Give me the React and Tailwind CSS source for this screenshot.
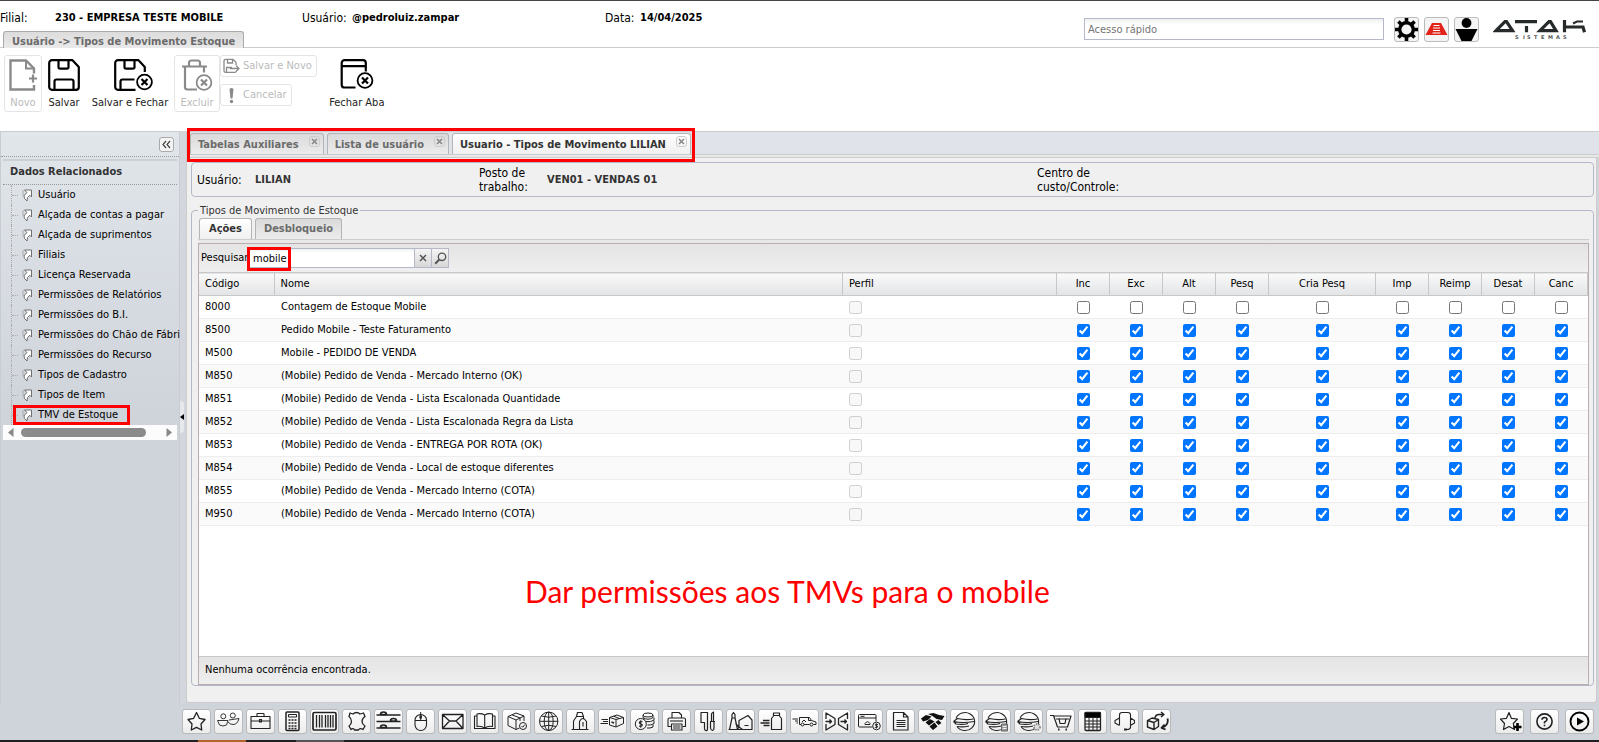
import React from "react";

const MENU = [
  "Usuário",
  "Alçada de contas a pagar",
  "Alçada de suprimentos",
  "Filiais",
  "Licença Reservada",
  "Permissões de Relatórios",
  "Permissões do B.I.",
  "Permissões do Chão de Fábri",
  "Permissões do Recurso",
  "Tipos de Cadastro",
  "Tipos de Item",
  "TMV de Estoque",
];

const FLAGS = ["Inc", "Exc", "Alt", "Pesq", "Cria Pesq", "Imp", "Reimp", "Desat", "Canc"];

const ROWS = [
  ["8000", "Contagem de Estoque Mobile", false],
  ["8500", "Pedido Mobile - Teste Faturamento", true],
  ["M500", "Mobile - PEDIDO DE VENDA", true],
  ["M850", "(Mobile) Pedido de Venda - Mercado Interno (OK)", true],
  ["M851", "(Mobile) Pedido de Venda - Lista Escalonada Quantidade", true],
  ["M852", "(Mobile) Pedido de Venda - Lista Escalonada Regra da Lista", true],
  ["M853", "(Mobile) Pedido de Venda - ENTREGA POR ROTA (OK)", true],
  ["M854", "(Mobile) Pedido de Venda - Local de estoque diferentes", true],
  ["M855", "(Mobile) Pedido de Venda - Mercado Interno (COTA)", true],
  ["M950", "(Mobile) Pedido de Venda - Mercado Interno (COTA)", true],
];

/* ---------- toolbar icons ---------- */

const CloseBadge = ({ cx, cy }) => (
  <g>
    <circle cx={cx} cy={cy} r="7.4" strokeWidth="1.8" />
    <path d={`M${cx - 3} ${cy - 3}l6 6m0-6l-6 6`} strokeWidth="2.2" />
  </g>
);

const NewIcon = () => (
  <svg width="30" height="32" viewBox="0 0 30 32" fill="none" stroke="#8a8a8a" strokeWidth="2.4">
    <path d="M26 14.5V9.5L18 1.5H2.5V30.5H26V26" />
    <path d="M18 1.5V9.5H26" strokeWidth="2" />
    <path d="M25 15.5v8M21 19.5h8" strokeWidth="2.2" />
  </svg>
);

const SaveIcon = () => (
  <svg width="32" height="32" viewBox="0 0 32 32" fill="none" stroke="#000" strokeWidth="2.2" strokeLinejoin="round">
    <path d="M4 1.2h20.5L30.8 8v20a2.8 2.8 0 0 1-2.8 2.8H4A2.8 2.8 0 0 1 1.2 28V4A2.8 2.8 0 0 1 4 1.2z" />
    <path d="M10.5 1.5V8a1.6 1.6 0 0 0 1.6 1.6h6.8A1.6 1.6 0 0 0 20.5 8V1.5" />
    <path d="M6.5 30.5V22.5a2 2 0 0 1 2-2h15a2 2 0 0 1 2 2v8" />
  </svg>
);

const SaveCloseIcon = () => (
  <svg width="46" height="32" viewBox="-7 0 46 32" fill="none" stroke="#000" strokeWidth="2.2" strokeLinejoin="round">
    <path d="M21.5 30.8H4A2.8 2.8 0 0 1 1.2 28V4A2.8 2.8 0 0 1 4 1.2h20.5L30.8 8v5" />
    <path d="M10.5 1.5V8a1.6 1.6 0 0 0 1.6 1.6h6.8A1.6 1.6 0 0 0 20.5 8V1.5" />
    <path d="M6.5 30.5V22.5a2 2 0 0 1 2-2h12" />
    <CloseBadge cx={30.5} cy={23} />
  </svg>
);

const TrashIcon = () => (
  <svg width="32" height="32" viewBox="0 0 32 32" fill="none" stroke="#8a8a8a" strokeWidth="2.2" strokeLinejoin="round">
    <path d="M1 7.5h25M8 7.5V4a2.5 2.5 0 0 1 2.5-2.5h6A2.5 2.5 0 0 1 19 4v3.5" />
    <path d="M4 8v20a2.5 2.5 0 0 0 2.5 2.5H16M23 8v5.5" />
    <CloseBadge cx={23} cy={23.5} />
  </svg>
);

const CloseTabIcon = () => (
  <svg width="34" height="32" viewBox="0 0 34 32" fill="none" stroke="#000" strokeWidth="2.2" strokeLinejoin="round">
    <path d="M15.5 28.5H4.5A2.8 2.8 0 0 1 1.7 25.7V4a2.8 2.8 0 0 1 2.8-2.8H23A2.8 2.8 0 0 1 25.8 4v8.5M1.7 7.2h24" />
    <CloseBadge cx={25} cy={21.5} />
  </svg>
);

const SaveNewIcon = () => (
  <svg width="17" height="16" viewBox="0 0 17 16" fill="none" stroke="#8a8a8a" strokeWidth="1.3">
    <path d="M13 13.2Q13 14.3 11.8 14.3H2.5a1.5 1.5 0 0 1-1.5-1.5v-10A1.5 1.5 0 0 1 2.5 1.3H10l3 3V7M4.5 1.5V5h5V1.5M3.5 14V9.5H9" />
    <path d="M7 10.5H16M13 7.5L16 10.5L13 13.5" />
  </svg>
);

const ShortcutIcon = () => (
  <svg className="shrink-0" width="11" height="13" viewBox="0 0 11 13" fill="#fff" stroke="#6f6f6f" strokeWidth="1">
    <path d="M1 1v6" stroke="#aaa" />
    <path d="M2.5 1H9.5V8L7.800 6.300Q4.500 8 5 12Q1.500 9.500 2 7Q2.500 5.500 5 3.500z" strokeLinejoin="round" />
  </svg>
);

/* ---------- bottom bar icons ---------- */

const Ball = () => (
  <g strokeWidth="1.1">
    <path d="M5 8.500A9.600 9 0 1 1 6 16.500" />
    <path d="M2.500 11.500L6.500 8.500Q14 10.500 22.500 9M2.500 11.500Q12 13.500 23 11.500M2.500 11.500L5 14Q12 15 17 13.500M6 16.500Q12 17.500 18 16" />
  </g>
);

const DOCK = [
  <path key="i" strokeWidth="1.300" d="M13.500 2.500L16.300 8.300L22 9.500L18 14L18.700 20L13.500 17.300L8.300 20L9 14L5 9.500L10.700 8.300z" />,
  <g key="i" strokeWidth=".9"><circle cx="8.300" cy="6.300" r="2.500" /><circle cx="17.800" cy="5.500" r="2.500" /><path d="M2.500 10.500H13L11.500 15Q8 17 4.500 15zM14 10L24 8.500Q22.500 14.500 18 14.500Q15 14.500 13 12" /></g>,
  <g key="i" strokeWidth="1.100"><path d="M4 6.500H23V18.500H4zM4 11H23M10 6V4Q10 3.500 10.500 3.500H16.500Q17 3.500 17 4V6M12.500 9.500h2v2.500h-2z" /></g>,
  <g key="i"><rect x="7" y="2" width="13" height="18.500" rx="1" strokeWidth="1.500" /><path d="M9.500 4.500H17.500V7H9.500z" /><path d="M9.500 10h2m1 0h2m1 0h2m-8 3h2m1 0h2m1 0h2m-8 3h2m1 0h2m1 0h2m-8 2.500h2m1 0h2m1 0h2" strokeWidth="1.500" /></g>,
  <g key="i"><rect x="2" y="2.500" width="23" height="17.500" rx="1.500" strokeWidth="1.700" /><path d="M5.500 5v12.500M8.500 5v12.500M11 5v12.500M14.500 5v12.500M17 5v12.500M19.500 5v12.500M22 5v12.500" strokeWidth="1.300" /></g>,
  <path key="i" strokeWidth="1.300" d="M7 3L10 4Q11.500 2.500 13.500 2.500Q15.500 2.500 17 4L20.500 3L22 6.500Q19 8.500 19 11.500Q19 14 22 16L20 19.500Q17 17.500 15.500 20H11.500Q10.500 17.500 8 19.500L6 16Q8.500 14 8.500 11.500Q8.500 8.500 6 6.500z" />,
  <g key="i" strokeWidth="1.600"><path d="M1.500 5H25.500M1.500 11.500H25.500M1.500 18H25.500" /><path d="M5.500 4.500a3 2.500 0 0 1 6 0zM15.500 11a3 2.500 0 0 1 6 0zM5.500 17.500a3 2.500 0 0 1 6 0z" fill="#fff" /></g>,
  <g key="i"><rect x="8" y="4.500" width="11.500" height="16" rx="5.700" strokeWidth="1.100" /><path d="M13.700 2v8M8 10.500H19.500" /><path d="M13.700 5.500v3" strokeWidth="2.500" /></g>,
  <g key="i" strokeWidth="1.300"><path d="M3.500 4.500H24V18.500H3.500zM3.500 4.500L10.500 11H17L24 4.500M3.500 18.500L10.500 11M24 18.500L17 11" /></g>,
  <g key="i" strokeWidth="1.100"><path d="M13.700 5Q10 3 6 4V16.500Q10 15.500 13.700 18Q17 15.500 21.500 16.500V4Q17 3 13.700 5zV18M6 6H3.500V18.500H24V6H21.500" /></g>,
  <g key="i"><path d="M5 6.500L13 3L21 6V11M5 6.500L13 10L21 6M5 6.500V15.500L13 19.500V10M13 19.500L16.500 18M9 4.800L17 8V11" /><circle cx="20" cy="16" r="3.500" /><path d="M18.500 16l1.200 1.200l2-2.500" /></g>,
  <g key="i"><circle cx="13.700" cy="11.300" r="9.200" /><ellipse cx="13.700" cy="11.300" rx="4.500" ry="9.200" /><path d="M13.700 2V20.500M4.500 11.300H23M6.500 6Q13.700 8.500 21 6M6.500 16.500Q13.700 14 21 16.500" /></g>,
  <g key="i" strokeWidth="1.100"><path d="M9.500 6.500L10.500 2.500H15L16.500 6.500zM9.500 6.500L6.500 11V19.500M16.500 6.500V8.500M12.500 19.500V11.500Q15.500 5.500 19.500 11.500V19.500M4.500 19.500H21.500M16 12V16.500" /></g>,
  <g key="i"><path d="M10.500 7.500L18 5L24.500 7.500V13.500L17 17L10.500 15zM10.500 7.500L17 9.500L24.500 7.500M17 9.500V17M14.500 6.200L20.500 8.500M2.500 9.500H9M4 11.500H9M1.500 13.500H9" /><path d="M12.500 12l2.500 1" strokeWidth="1.800" /></g>,
  <g key="i"><ellipse cx="17" cy="5" rx="5" ry="2" /><path d="M12 5v2.500Q17 11 22 7.500V5M13 8v2M14.500 11.500Q20 12.500 23 10V7.500M23 10.500V13.500Q20 15.500 16.500 15M22 14.500V17Q19 18.500 16 18" /><circle cx="9.800" cy="14" r="5.500" fill="#f8f8f8" /><path d="M11.500 11.800Q8.500 10.800 8.300 12.700Q8.500 13.800 10 14Q11.500 14.400 11.300 15.600Q10.500 17 8 16M9.800 10.300v7.500" strokeWidth="1.100" /></g>,
  <g key="i" strokeWidth="1.100"><path d="M9 8V2.500H16L18.500 5V8M8 16.500H5V9.500Q5 8 6.500 8H21Q22.500 8 22.500 9.500V16.500H19.500" /><path d="M8.500 14H19V20H8.500zM10 16H17.500M10 18H17.500" fill="#f8f8f8" /><path d="M7 11h13" /></g>,
  <g key="i" strokeWidth="1.200"><path d="M6 2.500H12.500V19.500Q12 21 10.500 20.500Q9.500 20 9.500 18.500V12.500H6zM16.500 11.500V4Q17 2.500 18.500 2V11.500M15 11.500H20M15.500 11.500V18Q16 20.500 17.500 20.500Q19 20 19 18V11.500" /></g>,
  <g key="i" strokeWidth="1.200"><path d="M2.500 19.500L5 8V4.500L6.500 2.500L8 4.500V8L10.500 19.500M5 8H8M1.500 19.500H25V10L21 5.500L12 10.500V17L8.500 13.500M10.500 19.500L12 17L15.500 19.500M17.500 15.500H21.500" /></g>,
  <g key="i" strokeWidth="1.200"><path d="M14.500 3H20.500V5.500H14.500zM14.500 6L12.500 8.500V19.500H22.500V8.500L20.500 6" /><path d="M4 10.500H10.500M1.500 13H10.500M4.500 15.500H10.500" strokeWidth="1.400" /></g>,
  <g key="i"><path d="M8.500 14.500V7.500H18.500L20.500 10.500L25 12V14.500H22.500M8.500 14.500H10M13 14.500H18.500M17.500 7.500V10.500H20.500M1.500 9H7M4 11H7M5.500 13H7" /><circle cx="11.500" cy="14.500" r="1.500" /><circle cx="20.500" cy="14.500" r="1.500" /><path d="M11 12l2-2l2 2" /></g>,
  <g key="i" strokeWidth="1.300"><path d="M3 9V3L12 8.500V14.500L3 20V14M24.500 9V3L15.500 8.500V14.500L24.500 20V14M2.500 11.500H8.500M6.500 9.500L8.500 11.500L6.500 13.500M17.500 11.500H23.500M21.500 9.500L23.500 11.500L21.500 13.500" /></g>,
  <g key="i"><path d="M17.500 17H4.500Q3.500 17 3.500 16V5.500Q3.500 4.500 4.500 4.500H20Q21 4.500 21 5.500V11.500M3.500 8H21M5.500 6.300h4" /><path d="M10 14.500v-1q2.500-3.500 5 0v1z" /><circle cx="21.500" cy="16" r="3.800" fill="#f8f8f8" /><path d="M23 14.500q-3-1-3 .5q3 .5 2.800 2q-1 1-3 .3M21.500 13.500v5" strokeWidth=".9" /></g>,
  <g key="i" strokeWidth="1.200"><path d="M6.500 2.500H16.500L21 7V20H6.500zM16.500 2.500V7H21" /><path d="M9.500 10.500H18.500M9.500 12.500H18.500M9.500 14.500H18.500M9.500 16.500H18.500" /></g>,
  <g key="i" fill="#111" stroke="none"><path d="M2 8.500L7 5L12.500 6.500L9 10L4 11.500zM9 4L14.500 3L20 5L25.500 6L23 10L17.500 9L13.500 6z" /><path d="M6.500 12.500L11 9L15.500 11.500L10 15.500zM16.500 12L19.500 10L22.500 13L19.500 15zM10.500 16.500L15.500 12.500L18.500 16.500L14 20z" /></g>,
  <Ball key="i" />,
  <g key="i"><Ball /><rect x="18.500" y="14" width="6" height="7" fill="#999" stroke="#666" /><path d="M19.500 16.500h4M19.500 18.500h4" stroke="#eee" /></g>,
  <g key="i"><Ball /><circle cx="22" cy="17" r="3" fill="#ddd" stroke="#888" strokeDasharray="1.500 1" strokeWidth="1.800" /></g>,
  <g key="i" strokeWidth="1.200"><path d="M3 5.500H6.500L10.500 17H20.500L24 6H7M9 9h13" /><path d="M12 8.500L13 13.500H18L19 8.500" /><path d="M11 19.500h1.500M18.500 19.500h1.500" strokeWidth="2.200" /></g>,
  <g key="i"><rect x="6" y="2.500" width="15.500" height="18" rx="1" strokeWidth="1.300" /><path d="M6 2.500h15.500v5H6z" fill="#000" /><path d="M6 11h15.500M6 14h15.500M6 17h15.500M10 8v12.500M14 8v12.500M18 8v12.500" /></g>,
  <g key="i" strokeWidth="1.100"><path d="M8.500 15V5Q8.500 2.500 11 2.500H17Q19.500 2.500 19.500 5V15M8.500 8L4 10.500V13L8.500 15.500M19.500 8L23.500 10.500V13L19.500 15.500V17.500Q19 19.500 16 19.500H14.500" /><path d="M13 19.500h3" strokeWidth="2" /></g>,
  <g key="i" strokeWidth="1.400"><path d="M4.500 10.500L9 8L15.500 9.500V16.500L11 19.500L4.500 17zM4.500 10.500L11 12.500L15.500 9.500M11 12.500V19.500M12 8Q12.500 4.500 16 4.500H20M18 2L21 4.500L18 7" /><path d="M24.500 8.500Q26 15 19.500 17.500M21.500 14.500L18.500 17.800L22.500 19.500" strokeWidth="1.800" /></g>,
];

const DOCK_NAMES = [
  "Favoritos", "Balança", "Pasta", "Calculadora", "Código de barras", "Couro", "Ajustes", "Mouse", "Mensagens", "Livro",
  "Conferência", "Globo", "Produto", "Entrega", "Financeiro", "Impressora", "Abate", "Indústria", "Leite", "Frota",
  "Integração", "Cobrança", "Documento", "Receita", "Fiscal", "Fiscal cálculo", "Fiscal ajustes", "Compras", "Planilha", "Suporte", "Devolução",
];

const SIDE_DOCK = [
  ["Adicionar favorito", <g key="i"><path strokeWidth="1.200" d="M13 2.500L15.300 8.300L21.500 9L17.300 13.500L18.500 19.500L13 16.500L7.500 19.500L8.500 13.500L4.500 9L10.500 8.300z" /><path d="M21.500 13v8M17.500 17h8" strokeWidth="2.600" stroke="#000" /></g>],
  ["Ajuda", <g key="i" strokeWidth="1.600"><circle cx="13.500" cy="11.500" r="7.600" /><path d="M11 9.800Q11 7.500 13.500 7.500Q16 7.500 16 9.500Q16 11 13.500 12V13.500M13.500 14.700v1.600" /></g>],
  ["Executar", <g key="i"><circle cx="13.500" cy="11.500" r="9" strokeWidth="1.900" stroke="#000" /><path d="M11 7.500L18 11.500L11 15.500z" fill="#000" stroke="none" /></g>],
];

const DockButton = ({ label, children }) => (
  <button aria-label={label} className="h-[25px] w-[29px] shrink-0 rounded-[3px] border border-[#b9b9b9] bg-gradient-to-b from-white to-[#ececec]">
    <svg width="27" height="23" viewBox="0 0 27 23" fill="none" stroke="#222" strokeWidth="1" strokeLinejoin="round">
      {children}
    </svg>
  </button>
);

/* ---------- parts ---------- */

const Header = () => (
  <header className="flex h-12 border-t border-b border-t-[#444] border-b-[#ccc]">
    <div className="flex-1">
      <div className="grid h-[27px] grid-cols-[302px_303px_1fr] items-center pt-1.5 text-[12px] leading-4">
        <div className="flex items-center"><span className="w-[55px]">Filial:</span><b className="text-[11px]">230 - EMPRESA TESTE MOBILE</b></div>
        <div className="flex items-center"><span className="w-[50px]">Usuário:</span><b className="text-[11px]">@pedroluiz.zampar</b></div>
        <div className="flex items-center"><span className="w-[35px]">Data:</span><b className="text-[11px]">14/04/2025</b></div>
      </div>
      <button className="ml-[3px] h-[21px] rounded-t-[3px] border border-b-0 border-[#aaa] bg-gradient-to-b from-[#dcdcdc] to-[#ededed] px-2 text-[11px] font-bold text-[#6b6b6b]">
        Usuário -&gt; Tipos de Movimento Estoque
      </button>
    </div>
    <div className="flex items-start pt-4 pr-3">
      <input
        aria-label="Acesso rápido"
        placeholder="Acesso rápido"
        className="mt-px mr-2.5 h-[22px] w-[300px] border border-[#b5b8c8] bg-gradient-to-b from-[#eef1f1] to-white to-30% px-[3px] text-[11px] placeholder:text-[#757575]"
      />
      <div className="flex gap-[5px]">
        <button aria-label="Configurações" className="size-[25px] rounded-[3px] border border-[#bbb] bg-[#f4f4f4]">
          <svg width="23" height="23" viewBox="0 0 23 23">
            <circle cx="11.500" cy="11.500" r="6.800" fill="none" stroke="#000" strokeWidth="3.400" />
            <path d="M11.500 0v4M11.500 19v4M0 11.500h4M19 11.500h4M3.400 3.400l2.800 2.800M16.800 16.800l2.800 2.800M3.400 19.600l2.800-2.800M16.800 6.200l2.800-2.800" stroke="#000" strokeWidth="3.600" />
          </svg>
        </button>
        <button aria-label="Empresa" className="size-[25px] rounded-[3px] border border-[#bbb] bg-[#f4f4f4]">
          <svg width="23" height="23" viewBox="0 0 23 23">
            <path d="M7 5H16L22.500 17H.5z" fill="#e2231a" />
            <path d="M8.500 7.500h6M8 10h7M8 12.500h7M7.500 15h8" stroke="#fff" strokeWidth="1" />
          </svg>
        </button>
        <button aria-label="Perfil do usuário" className="size-[25px] rounded-[3px] border border-[#bbb] bg-[#f4f4f4]">
          <svg width="23" height="23" viewBox="0 0 23 23">
            <circle cx="11.500" cy="5" r="4.900" />
            <path d="M.5 11H22.500L16.500 23H6.500z" />
          </svg>
        </button>
      </div>
      <svg aria-label="ATAK Sistemas" role="img" className="ml-[14px] mt-px" width="94" height="24" viewBox="0 0 94 24">
        <g fill="none" stroke="#262a2b" strokeWidth="3.200">
          <path d="M3 12.700L12 3.700H13.500L19.500 12.700z" />
          <path d="M22 3.700H44M33.500 8V14.200" />
          <path d="M47 12.700L56 3.700H57.500L63 12.700z" />
          <path d="M71.500 2V14.200M73 9H90L91.500 14.200" />
          <path d="M80 5.500L84 3.500H90" strokeWidth="2" />
        </g>
        <text x="22 30 34 41 48 55 63 70" y="21" fontSize="5" fontWeight="700" fill="#555" fontFamily="DejaVu Sans, sans-serif">SISTEMAS</text>
      </svg>
    </div>
  </header>
);

const BigButton = ({ icon, label, className, disabled }) => (
  <button
    disabled={disabled}
    className={`flex h-[57px] flex-col items-center justify-between rounded-[3px] border pt-[3px] text-[11px] leading-[16px] ${disabled ? "border-[#e4e4e4] text-[#bbb]" : "border-transparent text-[#222]"} ${className}`}
  >
    {icon}
    <span className="whitespace-nowrap">{label}</span>
  </button>
);

const Toolbar = () => (
  <div className="flex h-[83px] items-start bg-white pt-[7px] pl-1">
    <BigButton icon={<NewIcon />} label="Novo" className="w-[38px]" disabled />
    <BigButton icon={<SaveIcon />} label="Salvar" className="w-[44px]" />
    <BigButton icon={<SaveCloseIcon />} label="Salvar e Fechar" className="w-[88px]" />
    <BigButton icon={<TrashIcon />} label="Excluir" className="w-[46px]" disabled />
    <div className="flex flex-col items-start gap-[7px]">
      <button disabled className="flex h-[22px] items-center gap-[3px] rounded-[3px] border border-[#e4e4e4] pr-1 pl-0.5 text-[11px] text-[#bbb]">
        <SaveNewIcon />
        Salvar e Novo
      </button>
      <button disabled className="flex h-[22px] items-center gap-[3px] rounded-[3px] border border-[#e4e4e4] pr-1 pl-0.5 text-[11px] text-[#bbb]">
        <svg width="17" height="17" viewBox="0 0 17 17" fill="#8a8a8a">
          <path d="M6.500 2Q8.500 0 10.500 2L9.500 11.500H7.500z" />
          <circle cx="8.500" cy="14.500" r="1.700" />
        </svg>
        Cancelar
      </button>
    </div>
    <BigButton icon={<CloseTabIcon />} label="Fechar Aba" className="w-[80px]" />
  </div>
);

const Sidebar = () => (
  <aside className="flex w-[180px] shrink-0 flex-col border border-b-0 border-[#c9cdd2] bg-gradient-to-b from-[#e1e6eb] to-[#cfd3da] to-50%">
    <div className="flex h-[25px] shrink-0 items-center justify-end border-b border-dotted border-[#999] pr-[5px]">
      <button aria-label="Recolher painel" className="flex size-[15px] items-center justify-center rounded-[3px] border border-[#aaa] bg-[#f4f4f4]">
        <svg width="9" height="9" viewBox="0 0 9 9" fill="none" stroke="#444" strokeWidth="1.200"><path d="M4 1L1 4.500L4 8M8 1L5 4.500L8 8" /></svg>
      </button>
    </div>
    <nav aria-label="Dados Relacionados" className="mx-0.5 mt-0.5 border-t-2 border-[#ccd0d4]">
      <h2 className="h-[24px] border-b border-dotted border-[#999] pl-[7px] text-[11px] leading-[22px] font-bold text-[#333]">Dados Relacionados</h2>
      <ul className="text-[11px] leading-5">
        {MENU.map((m, i) => (
          <li key={m} className="relative flex h-5 items-center whitespace-nowrap">
            <span className="ml-2 h-full shrink-0 border-l border-dotted border-[#aaa]" />
            <span className="mr-1 w-1.5 shrink-0 border-t border-dotted border-[#aaa]" />
            <a href="#" className="flex items-center gap-[5px] text-black"><ShortcutIcon />{m}</a>
            {i === MENU.length - 1 && <span className="absolute top-0 left-2.5 h-5 w-[117px] border-3 border-[#f00]" />}
          </li>
        ))}
      </ul>
      <div className="flex h-[15px] items-center justify-between bg-[#fcfcfc] px-[5px]">
        <svg width="6" height="9" viewBox="0 0 6 9" fill="#888"><path d="M5.500 0V9L0 4.500z" /></svg>
        <span className="mr-[14px] h-[9px] w-[125px] rounded-full bg-[#8b8b8b]" />
        <svg width="6" height="9" viewBox="0 0 6 9" fill="#888"><path d="M.5 0V9L6 4.500z" /></svg>
      </div>
    </nav>
  </aside>
);

const DocTab = ({ label, active }) => (
  <div className={`flex h-[21px] rounded-t-[3px] border border-b-0 border-[#b4b4b4] pl-[7px] text-[11px] font-bold ${active ? "bg-gradient-to-b from-white to-[#f0f0f0] text-[#333]" : "bg-gradient-to-b from-[#dadada] to-[#ececec] text-[#6b6b6b]"}`}>
    <button className="mr-2.5 pt-0.5 whitespace-nowrap">{label}</button>
    <button aria-label={`Fechar ${label}`} className="mt-0.5 mr-[3px] flex size-[11px] items-center justify-center rounded-[3px] border border-[#ccc]">
      <svg width="7" height="7" viewBox="0 0 7 7" stroke="#888" strokeWidth="1.600"><path d="M1 1L6 6M6 1L1 6" /></svg>
    </button>
  </div>
);

const Grid = () => (
  <table className="w-full table-fixed border-collapse text-[11px] leading-4">
    <colgroup>
      <col className="w-[75px]" />
      <col />
      <col className="w-[214px]" />
      {FLAGS.map((f) => <col key={f} className={f === "Cria Pesq" ? "w-[107px]" : "w-[53px]"} />)}
    </colgroup>
    <thead>
      <tr className="h-[23px] border-y border-[#c8c8c8] bg-gradient-to-b from-[#f9f9f9] to-[#e3e4e6]">
        <th className="border-r border-[#c8c8c8] p-0 pl-1.5 text-left font-normal">Código</th>
        <th className="border-r border-[#c8c8c8] p-0 pl-1.5 text-left font-normal">Nome</th>
        <th className="border-r border-[#c8c8c8] p-0 pl-1.5 text-left font-normal">Perfil</th>
        {FLAGS.map((f) => <th key={f} className="border-r border-[#c8c8c8] p-0 text-center font-normal">{f}</th>)}
      </tr>
    </thead>
    <tbody>
      {ROWS.map(([code, name, on]) => (
        <tr key={code} className="h-[23px] border-b border-[#ededed] odd:bg-white even:bg-[#fafafa]">
          <td className="p-0 pl-1.5">{code}</td>
          <td className="p-0 pl-[7px]">{name}</td>
          <td className="p-0 pl-1.5"><input type="checkbox" disabled aria-label={`Perfil ${code}`} className="block size-[13px]" /></td>
          {FLAGS.map((f) => (
            <td key={f} className="p-0"><input type="checkbox" defaultChecked={on} aria-label={`${f} ${code}`} className="mx-auto block size-[13px] accent-[#0075ff]" /></td>
          ))}
        </tr>
      ))}
    </tbody>
  </table>
);

const Main = () => (
  <main className="flex min-w-0 flex-1 flex-col">
    <div className="relative flex h-[23px] shrink-0 items-end gap-[3px] border-t border-[#c9cdd2] bg-[#e0e4ea] pl-[3px]">
      <DocTab label="Tabelas Auxiliares" />
      <DocTab label="Lista de usuário" />
      <DocTab label="Usuario - Tipos de Movimento LILIAN" active />
      <span className="pointer-events-none absolute -top-1 left-0 h-[34px] w-[508px] border-3 border-[#f00]" />
    </div>
    <div className="h-1 shrink-0 border-y border-[#ccc] bg-[#e8e8e8]" />
    <div className="mr-0.5 flex flex-1 flex-col rounded-b-[3px] border-r border-b border-[#ccc] bg-[#f0f0f0] pt-1 pr-0.5 pb-4 pl-1">
      <div className="grid h-[35px] grid-cols-[282px_558px_1fr] items-center rounded-[4px] border border-[#b5b8c8] px-[5px] pt-px text-[12px] leading-[14px]">
        <div className="flex items-center"><span className="w-[58px]">Usuário:</span><b className="text-[11px] text-[#333]">LILIAN</b></div>
        <div className="flex items-center"><span className="w-[68px]">Posto de<br />trabalho:</span><b className="text-[11px] text-[#333]">VEN01 - VENDAS 01</b></div>
        <div>Centro de<br />custo/Controle:</div>
      </div>
      <fieldset className="mt-1.5 flex min-w-0 flex-1 flex-col rounded-[4px] border border-[#b5b8c8] pr-1 pl-1.5">
        <legend className="px-0.5 text-[11px] leading-[15px] text-[#333]">Tipos de Movimento de Estoque</legend>
        <div className="flex gap-[3px] pl-px">
          <button className="h-[21px] rounded-t-[3px] border border-b-0 border-[#b4b4b4] bg-gradient-to-b from-white to-[#f0f0f0] px-[9px] pt-px text-[11px] font-bold text-[#333]">Ações</button>
          <button className="h-[21px] rounded-t-[3px] border border-b-0 border-[#b4b4b4] bg-gradient-to-b from-[#dadada] to-[#ececec] px-2 pt-px text-[11px] font-bold text-[#6b6b6b]">Desbloqueio</button>
        </div>
        <div className="h-1 border-t border-[#ccc] bg-[#e8e8e8]" />
        <div className="flex flex-1 flex-col border border-[#b9adb0] bg-white">
          <div className="relative flex h-7 items-center bg-gradient-to-b from-[#e4e4e4] to-[#efefef] pl-0.5">
            <label htmlFor="pesquisar" className="w-[47px] text-[11px] whitespace-nowrap">Pesquisar:</label>
            <input id="pesquisar" defaultValue="mobile" className="h-5 w-[167px] border border-[#b5b8c8] bg-gradient-to-b from-[#eef1f1] to-white to-20% pl-1 text-[11px] text-black" />
            <button aria-label="Limpar" className="flex h-5 w-[17px] items-center justify-center border-y border-r border-[#b5b8c8] bg-gradient-to-b from-[#f4f4f4] to-[#d8d8d8]">
              <svg width="8" height="8" viewBox="0 0 8 8" stroke="#555" strokeWidth="1.500"><path d="M1 1L7 7M7 1L1 7" /></svg>
            </button>
            <button aria-label="Pesquisar" className="flex h-5 w-[17px] items-center justify-center border-y border-r border-[#b5b8c8] bg-gradient-to-b from-[#f4f4f4] to-[#d8d8d8]">
              <svg width="13" height="13" viewBox="0 0 13 13" fill="none" stroke="#555"><circle cx="8" cy="4.800" r="3.700" strokeWidth="1.300" /><path d="M5.300 7.500L1.200 11.700" strokeWidth="2" /></svg>
            </button>
            <span className="pointer-events-none absolute top-[3px] left-12 h-6 w-[44px] border-3 border-[#f00]" />
          </div>
          <Grid />
          <div className="flex flex-1 items-center">
            <p className="ml-[326px] font-['Lato'] text-[30px] leading-8 text-[#f00]">Dar permissões aos TMVs para o mobile</p>
          </div>
          <div className="flex h-7 items-center border-t border-[#c8c8c8] bg-gradient-to-b from-[#e4e4e4] to-[#efefef] pl-1.5 text-[11px]">Nenhuma ocorrência encontrada.</div>
        </div>
      </fieldset>
    </div>
  </main>
);

export default function App() {
  return (
    <div className="flex min-h-screen flex-col bg-white font-['DejaVu_Sans_Condensed','DejaVu_Sans',sans-serif] text-black">
      <Header />
      <Toolbar />
      <div className="flex flex-1 bg-[#cfd3da]">
        <Sidebar />
        <div className="flex w-[7px] shrink-0 flex-col items-start justify-center border-r border-[#ccc] bg-[#d3d7dd]">
          <button aria-label="Recolher" className="flex h-8 w-1 items-center rounded-r-sm bg-[#e6e8ec]">
            <svg width="4" height="6" viewBox="0 0 4 6"><path d="M4 0V6L0 3z" /></svg>
          </button>
        </div>
        <Main />
      </div>
      <footer className="flex h-[37px] items-center justify-between bg-[#cfd3da] pr-[5px] pl-[182px]">
        <div className="flex gap-[3px]">
          {DOCK.map((g, i) => <DockButton key={DOCK_NAMES[i]} label={DOCK_NAMES[i]}>{g}</DockButton>)}
        </div>
        <div className="flex gap-1.5">
          {SIDE_DOCK.map(([n, g]) => <DockButton key={n} label={n}>{g}</DockButton>)}
        </div>
      </footer>
      <div className="flex h-0.5 gap-[50px] bg-[#1f2023] pl-[198px]">
        <span className="w-12 bg-[#b5652b]" />
        <span className="w-12 bg-[#555]" />
      </div>
    </div>
  );
}
